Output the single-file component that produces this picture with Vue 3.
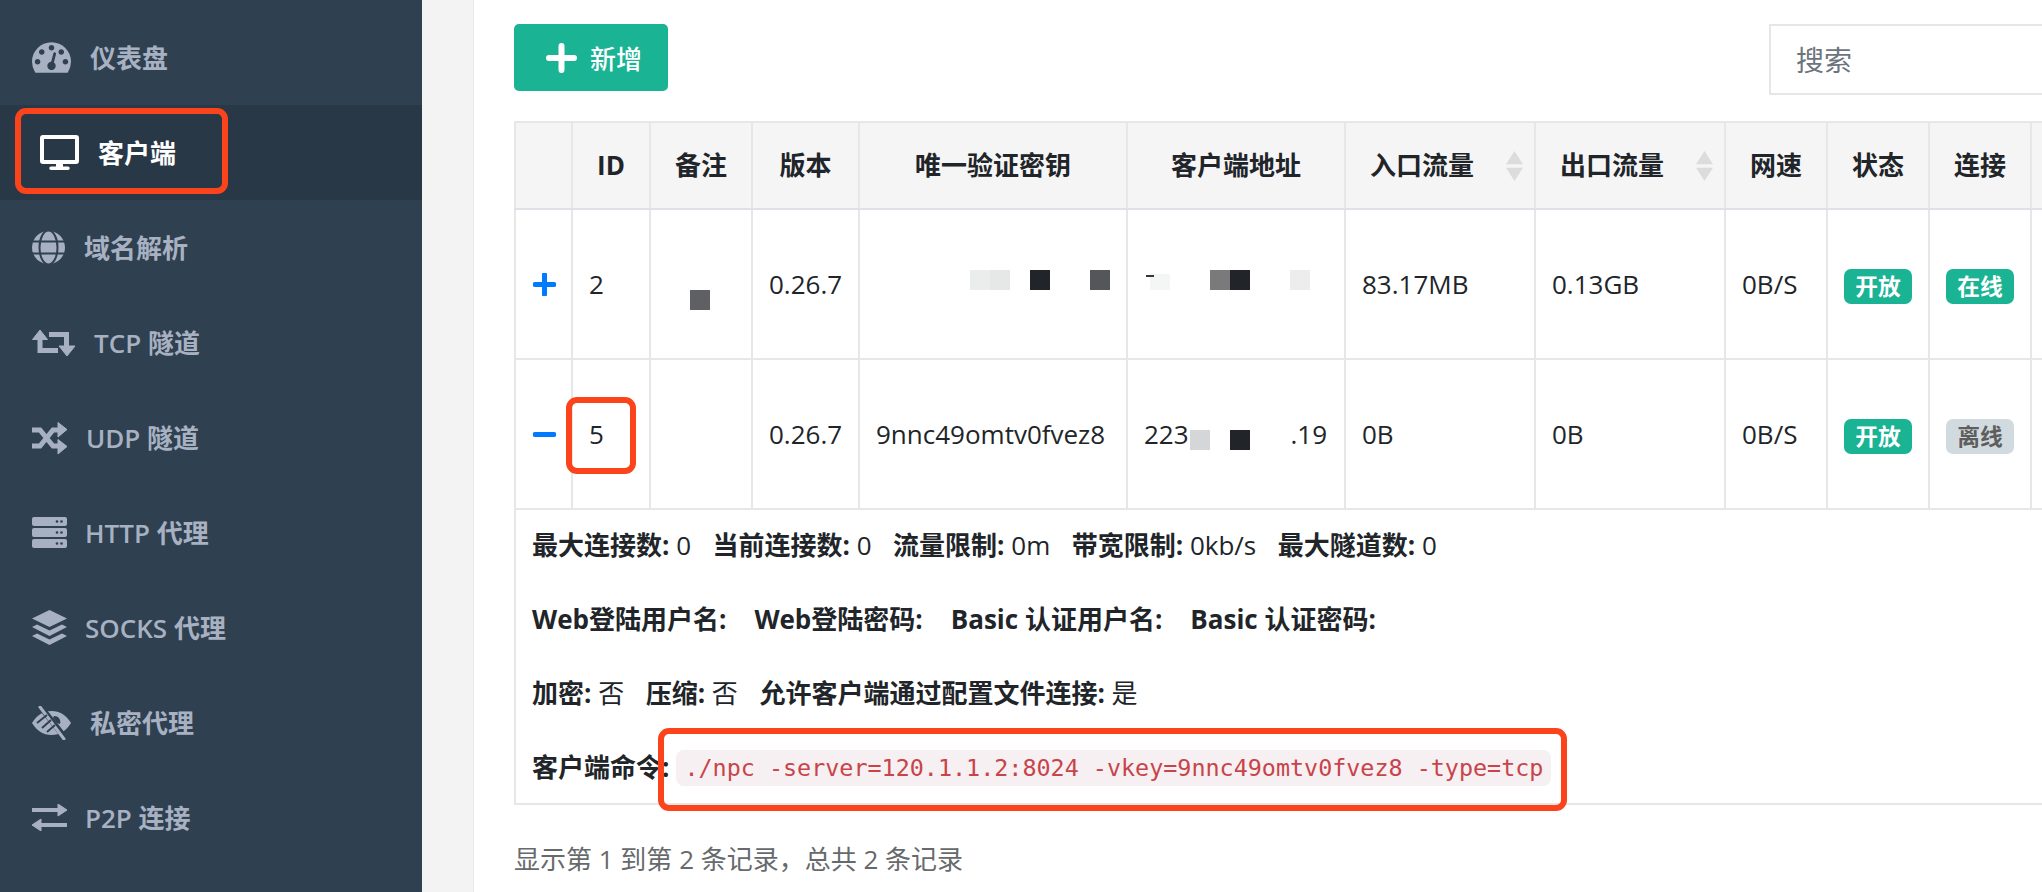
<script setup>
const columns = [
  { key: "expand", label: "", width: 57 },
  { key: "id", label: "ID", width: 78 },
  { key: "remark", label: "备注", width: 102 },
  { key: "version", label: "版本", width: 107 },
  { key: "vkey", label: "唯一验证密钥", width: 268 },
  { key: "addr", label: "客户端地址", width: 218 },
  { key: "in", label: "入口流量", width: 190, sortable: true },
  { key: "out", label: "出口流量", width: 190, sortable: true },
  { key: "speed", label: "网速", width: 102 },
  { key: "status", label: "状态", width: 102 },
  { key: "conn", label: "连接", width: 102 },
  { key: "more", label: "", width: 120 },
];

const rows = [
  { id: 2, version: "0.26.7", vkey: "", addr: [], inFlow: "83.17MB", outFlow: "0.13GB", online: true, open: false },
  { id: 5, version: "0.26.7", vkey: "9nnc49omtv0fvez8", addr: ["223", ".19"], inFlow: "0B", outFlow: "0B", online: false, open: true },
];

const nav = [
  { label: "仪表盘", icon: "gauge" },
  { label: "客户端", icon: "desktop", active: true },
  { label: "域名解析", icon: "globe" },
  { label: "TCP 隧道", icon: "retweet", latin: true },
  { label: "UDP 隧道", icon: "random", latin: true },
  { label: "HTTP 代理", icon: "server", latin: true },
  { label: "SOCKS 代理", icon: "layers", latin: true },
  { label: "私密代理", icon: "eye" },
  { label: "P2P 连接", icon: "exchange", latin: true },
];

// 打码的小方块
const mosaics = [
  { x: 690, y: 290, w: 20, h: 20, c: "#5f6064" },
  { x: 970, y: 270, w: 20, h: 20, c: "#ebecec" },
  { x: 990, y: 270, w: 20, h: 20, c: "#e6e7e7" },
  { x: 1030, y: 270, w: 20, h: 20, c: "#212529" },
  { x: 1090, y: 270, w: 20, h: 20, c: "#54575a" },
  { x: 1150, y: 274, w: 20, h: 16, c: "#f4f5f5" },
  { x: 1146, y: 275, w: 8, h: 2, c: "#33373b" },
  { x: 1210, y: 270, w: 20, h: 20, c: "#7a7a7a" },
  { x: 1230, y: 270, w: 20, h: 20, c: "#212529" },
  { x: 1290, y: 270, w: 20, h: 20, c: "#ededed" },
  { x: 1190, y: 430, w: 20, h: 20, c: "#d5d6d7" },
  { x: 1230, y: 430, w: 20, h: 20, c: "#212529" },
];
</script>

<template>
  <div class="page">
    <aside class="sidebar">
      <a v-for="item in nav" :key="item.label" class="nav-item" :class="{ active: item.active }">
        <svg v-if="item.icon === 'gauge'" width="39" height="31" viewBox="0 256 1792 1408" fill="currentColor">
          <path d="M384 1152q0-53-37.500-90.500t-90.500-37.500-90.500 37.500-37.500 90.500 37.500 90.500 90.500 37.500 90.500-37.500 37.500-90.500zm192-448q0-53-37.500-90.500t-90.500-37.500-90.500 37.500-37.500 90.500 37.500 90.500 90.500 37.500 90.500-37.500 37.500-90.500zm428 481l101-382q6-26-7.500-48.500t-38.500-29.500-48 6.500-30 39.500l-101 382q-60 5-107 43.500t-63 98.500q-20 77 20 146t117 89 146-20 89-117q16-60-6-117t-72-91zm660-33q0-53-37.500-90.500t-90.500-37.500-90.500 37.500-37.500 90.500 37.500 90.500 90.500 37.500 90.500-37.500 37.500-90.500zm-640-640q0-53-37.500-90.500t-90.500-37.500-90.500 37.500-37.500 90.500 37.500 90.500 90.500 37.500 90.500-37.500 37.500-90.500zm448 192q0-53-37.500-90.500t-90.500-37.500-90.500 37.500-37.500 90.500 37.500 90.500 90.500 37.500 90.500-37.500 37.500-90.500zm320 448q0 261-141 483-19 29-54 29h-1402q-35 0-54-29-141-221-141-483 0-182 71-348t191-286 286-191 348-71 348 71 286 191 191 286 71 348z" />
        </svg>
        <svg v-else-if="item.icon === 'desktop'" width="39" height="35" viewBox="0 0 39 35" fill="currentColor">
          <path fill-rule="evenodd" d="M3 0h33a3 3 0 0 1 3 3v23a3 3 0 0 1-3 3H3a3 3 0 0 1-3-3V3a3 3 0 0 1 3-3zM4 4v21h31V4z" />
          <path d="M16 29h7v2.500h5a1.500 1.500 0 0 1 0 3.500H11a1.500 1.500 0 0 1 0-3.500h5z" />
        </svg>
        <svg v-else-if="item.icon === 'globe'" width="33" height="33" viewBox="0 0 33 33">
          <circle cx="16.500" cy="16.500" r="16.500" fill="currentColor" />
          <ellipse cx="16.500" cy="16.500" rx="9" ry="17" fill="none" stroke="#2f4050" stroke-width="2" />
          <path d="M0 10.500h33M0 22.500h33" stroke="#2f4050" stroke-width="2" />
        </svg>
        <svg v-else-if="item.icon === 'retweet'" width="44" height="28" viewBox="0 0 44 28" fill="currentColor">
          <path d="M8 6v15.500h18M17 5.500h17.500V18" fill="none" stroke="currentColor" stroke-width="5" />
          <path d="M0.500 10.500 8 1l7.500 9.500zM27 17l8 10 8-10z" stroke="currentColor" stroke-width="1" stroke-linejoin="round" />
        </svg>
        <svg v-else-if="item.icon === 'random'" width="36" height="32" viewBox="0 0 36 32" fill="currentColor">
          <path d="M0 8h8l13 16h6M0 24h8L21 8h6" fill="none" stroke="currentColor" stroke-width="5" />
          <path d="M26 0.500 35 7.500 26 15zM26 17.500 35 24.500 26 32z" stroke="currentColor" stroke-linejoin="round" />
        </svg>
        <svg v-else-if="item.icon === 'server'" width="35" height="31" viewBox="0 0 35 31">
          <g v-for="y in [0, 11, 22]" :key="y">
            <rect x="0" :y="y" width="35" height="9" rx="2" fill="currentColor" />
            <circle cx="25" :cy="y + 4.500" r="1.300" fill="#2f4050" />
            <circle cx="29.500" :cy="y + 4.500" r="1.300" fill="#2f4050" />
          </g>
        </svg>
        <svg v-else-if="item.icon === 'layers'" width="35" height="35" viewBox="0 0 35 35" fill="currentColor">
          <path d="M17.500 0 35 8.500 17.500 17 0 8.500z" />
          <path d="M0 17 5 14.500 17.500 20.500 30 14.500 35 17 17.500 26z" />
          <path d="M0 26 5 23.500 17.500 29.500 30 23.500 35 26 17.500 35z" />
        </svg>
        <svg v-else-if="item.icon === 'eye'" width="39" height="34" viewBox="0 0 39 34" fill="currentColor">
          <path d="M0 17C5 9 11 5 19.500 5S34 9 39 17c-5 8-11 12-19.500 12S5 25 0 17z" />
          <path d="M8 0 34 33" stroke="#2f4050" stroke-width="6" />
          <path d="M8 1 32 33" stroke="currentColor" stroke-width="3" stroke-linecap="round" />
          <path d="M5 17 15 9M10 22 19 14M15 26 23 19" stroke="#2f4050" stroke-width="2" fill="none" />
          <path d="M22 10a6 6 0 0 1 6 8l-3-1-4-5z" fill="#2f4050" />
        </svg>
        <svg v-else width="35" height="27" viewBox="0 0 35 27" fill="currentColor">
          <path d="M0 6h27M8 21h27" fill="none" stroke="currentColor" stroke-width="4" />
          <path d="M26 0 35 6 26 12zM9 15 0 21 9 27z" stroke="currentColor" stroke-linejoin="round" />
        </svg>
        <span class="nav-label" :class="{ latin: item.latin }">{{ item.label }}</span>
      </a>
    </aside>

    <div class="gutter"></div>

    <main class="main">
      <div class="toolbar">
        <button class="btn-add">
          <svg width="31" height="30" viewBox="0 0 31 30">
            <path d="M15.500 3v24M3 15h25" stroke="#fff" stroke-width="6" stroke-linecap="round" />
          </svg>
          新增
        </button>
        <input class="search" placeholder="搜索" />
      </div>

      <table class="table">
        <colgroup>
          <col v-for="col in columns" :key="col.key" :style="{ width: col.width + 'px' }" />
        </colgroup>
        <thead>
          <tr>
            <th v-for="col in columns" :key="col.key" :class="{ sortable: col.sortable }">
              {{ col.label }}
              <span v-if="col.sortable" class="sort"></span>
            </th>
          </tr>
        </thead>
        <tbody>
          <template v-for="row in rows" :key="row.id">
            <tr class="data-row">
              <td class="expand">
                <svg width="23" height="23" viewBox="0 0 23 23">
                  <path v-if="!row.open" d="M11.500 1.500v20" stroke="#007bff" stroke-width="5" stroke-linecap="round" />
                  <path d="M2 11.500h19" stroke="#007bff" stroke-width="5" stroke-linecap="round" />
                </svg>
              </td>
              <td>{{ row.id }}</td>
              <td></td>
              <td>{{ row.version }}</td>
              <td>{{ row.vkey }}</td>
              <td>
                <span v-if="row.addr.length" class="addr">
                  <span>{{ row.addr[0] }}</span>
                  <span>{{ row.addr[1] }}</span>
                </span>
              </td>
              <td>{{ row.inFlow }}</td>
              <td>{{ row.outFlow }}</td>
              <td>0B/S</td>
              <td class="center"><span class="badge">开放</span></td>
              <td class="center">
                <span class="badge" :class="{ off: !row.online }">{{ row.online ? "在线" : "离线" }}</span>
              </td>
              <td></td>
            </tr>
            <tr v-if="row.open">
              <td colspan="12" class="detail">
                <p>
                  <span><b>最大连接数:</b> 0</span>
                  <span><b>当前连接数:</b> 0</span>
                  <span><b>流量限制:</b> 0m</span>
                  <span><b>带宽限制:</b> 0kb/s</span>
                  <span><b>最大隧道数:</b> 0</span>
                </p>
                <p class="wide">
                  <b>Web登陆用户名:</b>
                  <b>Web登陆密码:</b>
                  <b>Basic 认证用户名:</b>
                  <b>Basic 认证密码:</b>
                </p>
                <p>
                  <span><b>加密:</b> 否</span>
                  <span><b>压缩:</b> 否</span>
                  <span><b>允许客户端通过配置文件连接:</b> 是</span>
                </p>
                <p class="cmd">
                  <b>客户端命令:</b>
                  <code>./npc -server=120.1.1.2:8024 -vkey=9nnc49omtv0fvez8 -type=tcp</code>
                </p>
              </td>
            </tr>
          </template>
        </tbody>
      </table>

      <div class="summary">显示第 1 到第 2 条记录，总共 2 条记录</div>
    </main>

    <span
      v-for="m in mosaics"
      :key="m.x + '-' + m.y"
      class="mosaic"
      :style="{ left: m.x + 'px', top: m.y + 'px', width: m.w + 'px', height: m.h + 'px', background: m.c }"
    ></span>

    <div class="mark mark-nav"></div>
    <div class="mark mark-id"></div>
    <div class="mark mark-cmd"></div>
  </div>
</template>

<style>
html,
body {
  margin: 0;
  background: #fff;
}
</style>

<style scoped>
.page {
  position: relative;
  display: flex;
  width: 2042px;
  height: 892px;
  overflow: hidden;
  font-family: "Open Sans", "Noto Sans CJK SC", sans-serif;
  font-size: 26px;
  line-height: 39px;
  color: #212529;
}

.sidebar {
  width: 422px;
  flex: none;
  padding-top: 10px;
  box-sizing: border-box;
  background: #2f4050;
}

.nav-item {
  display: flex;
  align-items: center;
  gap: 19px;
  height: 95px;
  padding-left: 32px;
  color: #a7b1c2;
  font-weight: 600;
}

.nav-item.active {
  padding-left: 40px;
  color: #fff;
  background: #293846;
}

.nav-label {
  padding-top: 2px;
}

.nav-label.latin {
  margin-left: -1px;
}

.gutter {
  width: 51px;
  flex: none;
  background: #f3f3f4;
  border-right: 1px solid #e7eaec;
}

.main {
  flex: 1;
  min-width: 0;
  padding: 24px 0 0 40px;
}

.toolbar {
  display: flex;
  justify-content: space-between;
  align-items: flex-start;
  width: 1655px;
  margin-bottom: 26px;
}

.btn-add {
  display: flex;
  align-items: center;
  gap: 13px;
  width: 154px;
  height: 67px;
  padding: 0 0 0 32px;
  border: 0;
  border-radius: 5px;
  background: #1ab394;
  color: #fff;
  font-family: inherit;
  font-size: 26px;
  font-weight: 500;
}

.search {
  width: 400px;
  height: 71px;
  box-sizing: border-box;
  padding: 0 25px;
  border: 2px solid #e5e6e7;
  font-family: inherit;
  font-size: 28px;
  outline: none;
}

.search::placeholder {
  color: #6c757d;
  opacity: 1;
}

.table {
  width: 1636px;
  table-layout: fixed;
  border-collapse: collapse;
}

th,
td {
  padding: 0 16px;
  border: 2px solid #e7e7e7;
}

th {
  position: relative;
  height: 85px;
  background: #f5f5f6;
  border-bottom-color: #dee2e6;
  font-weight: 700;
  text-align: center;
}

th.sortable {
  padding-right: 52px;
}

/* 排序的上下三角 */
.sort {
  position: absolute;
  right: 11px;
  top: 28px;
  width: 17px;
  height: 30px;
  background: #dcdcdc;
  clip-path: polygon(50% 0, 100% 44%, 0 44%, 50% 0, 50% 100%, 0 56%, 100% 56%, 50% 100%);
}

.data-row td {
  height: 148px;
}

.expand {
  padding: 0 0 0 17px;
}

.expand svg {
  display: block;
}

.center {
  padding: 0;
  text-align: center;
}

.addr {
  display: flex;
  justify-content: space-between;
  width: 183px;
}

.badge {
  display: inline-block;
  width: 68px;
  height: 35px;
  border-radius: 7px;
  background: #1ab394;
  color: #fff;
  font-size: 22.75px;
  font-weight: 700;
  line-height: 35px;
  text-align: center;
  vertical-align: middle;
}

.badge.off {
  background: #d1dade;
  color: #5e5e5e;
}

.detail {
  padding: 16px;
}

.detail p {
  display: flex;
  align-items: center;
  gap: 21.5px;
  margin: 0 0 35px;
  white-space: pre;
}

.detail p.wide {
  gap: 28px;
}

.detail p.cmd {
  gap: 7px;
  margin-bottom: 0;
}

code {
  padding: 0 8px;
  border-radius: 8px;
  background: #f6f0f2;
  color: #c8444a;
  font-family: "DejaVu Sans Mono", monospace;
  font-size: 23.4px;
  line-height: 36px;
}

.summary {
  margin-top: 35px;
  color: #676a6c;
}

.mosaic {
  position: absolute;
}

.mark {
  position: absolute;
  box-sizing: border-box;
  border: 6px solid #fb441c;
  border-radius: 11px;
}

.mark-nav {
  left: 15px;
  top: 108px;
  width: 213px;
  height: 86px;
}

.mark-id {
  left: 566px;
  top: 397px;
  width: 70px;
  height: 77px;
}

.mark-cmd {
  left: 658px;
  top: 728px;
  width: 909px;
  height: 83px;
}
</style>
